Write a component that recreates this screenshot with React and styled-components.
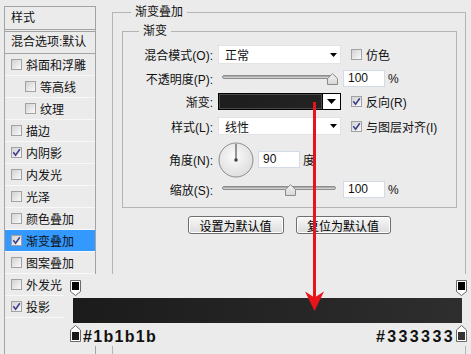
import styled, { createGlobalStyle } from "styled-components";

const GlobalStyle = createGlobalStyle`
  html, body { margin: 0; padding: 0; background: #ebebeb; }
  body {
    font-family: "Liberation Sans", "Noto Sans CJK SC", sans-serif;
    font-size: 12px;
    color: #111;
  }
`;

const Window = styled.div`
  position: relative;
  width: 471px;
  height: 354px;
  overflow: hidden;
  display: flex;
  align-items: flex-start;
  background: #ebebeb;
`;

/* 左侧样式列表 */
const Sidebar = styled.ul`
  list-style: none;
  margin: 6px 0 0 4px;
  padding: 0;
  width: 92px;
  height: 420px;
  box-sizing: border-box;
  border: 1px solid #a3a3a3;
  flex-shrink: 0;
`;

const SideHead = styled.li`
  height: ${(p) => p.$h}px;
  line-height: ${(p) => p.$h}px;
  padding-left: 6px;
  white-space: nowrap;
  border-bottom: ${(p) => (p.$double ? "3px double #a3a3a3" : "1px solid #a3a3a3")};
`;

const SideItem = styled.li`
  display: flex;
  align-items: center;
  gap: 4px;
  height: 21px;
  padding-left: ${(p) => (p.$nested ? 20 : 6)}px;
  border-bottom: 1px solid #f8f8f8;
  background: ${(p) => (p.$active ? "#3399ff" : "transparent")};
  white-space: nowrap;
`;

const Box = styled.span`
  width: 11px;
  height: 11px;
  box-sizing: border-box;
  border: 1px solid #a2a2a2;
  background: linear-gradient(135deg, #d2d2d2, #fafafa);
  display: inline-flex;
  align-items: center;
  justify-content: center;
  flex-shrink: 0;
`;

function Check({ on }) {
  return (
    <Box>
      {on && (
        <svg width="9" height="9" viewBox="0 0 9 9">
          <path d="M1.3 4.3 L3.6 7.2 L7.8 1.2" fill="none" stroke="#3e3e8c" strokeWidth="1.6" />
        </svg>
      )}
    </Box>
  );
}

/* 右侧面板 */
const Main = styled.div`
  margin-left: 16px;
  width: 354px;
  flex-shrink: 0;
`;

const OuterSet = styled.fieldset`
  margin: 5px 0 0;
  padding: 0;
  height: 420px;
  box-sizing: border-box;
  border: 1px solid #b4b4b4;
  min-width: 0;
`;

const Legend = styled.legend`
  margin-left: ${(p) => p.$indent}px;
  padding: 0 4px;
  font-size: 12px;
  line-height: 14px;
`;

const InnerSet = styled.fieldset`
  margin: 5px 8px 0 9px;
  padding: 0 0 9px;
  border: 1px solid #b4b4b4;
  min-width: 0;
`;

const Row = styled.div`
  display: flex;
  align-items: center;
  height: ${(p) => p.$h}px;
  margin-top: ${(p) => p.$top}px;
`;

const Label = styled.label`
  width: 90px;
  padding-right: 5px;
  text-align: right;
  flex-shrink: 0;
  white-space: nowrap;
`;

const Select = styled.div`
  width: 123px;
  height: 100%;
  box-sizing: border-box;
  background: #fff;
  border: 1px solid #e3e3e3;
  display: flex;
  align-items: center;
  justify-content: space-between;
  padding: 0 3px 0 6px;
`;

const Option = styled.span`
  display: flex;
  align-items: center;
  gap: 4px;
  margin-left: 10px;
  white-space: nowrap;
`;

const Slider = styled.div`
  position: relative;
  width: 114px;
  height: 12px;
  margin: 0 5px 0 4px;
  flex-shrink: 0;
`;

const Track = styled.div`
  position: absolute;
  left: 0;
  right: 0;
  top: 2px;
  height: 4px;
  box-sizing: border-box;
  border-radius: 2px;
  border: 1px solid #8d8d8d;
  background: linear-gradient(#999, #e2e2e2);
`;

const Thumb = styled.svg`
  position: absolute;
  top: 0;
  margin-left: -5.5px;
`;

const NumBox = styled.div`
  width: 42px;
  height: 17px;
  box-sizing: border-box;
  margin-left: ${(p) => p.$gap}px;
  border: 1px solid #d3dce6;
  background: #fff;
  padding-left: 4px;
  line-height: 15px;
  flex-shrink: 0;
`;

const Unit = styled.span`
  margin-left: 3px;
`;

const GradPick = styled.div`
  display: flex;
  width: 123px;
  height: 100%;
  box-sizing: border-box;
  border: 1px solid #000;
`;

const GradSwatch = styled.div`
  flex: 1;
  background: linear-gradient(to right, #1d1d1d, #232323);
  box-shadow: inset 0 0 0 1px #4a4a4a;
  border-right: 1px solid #000;
`;

const GradArrow = styled.div`
  width: 17px;
  display: flex;
  align-items: center;
  justify-content: center;
  background: #fff;
`;

const Dial = styled.svg`
  flex-shrink: 0;
`;

const BtnRow = styled.div`
  display: flex;
  justify-content: center;
  gap: 12px;
  margin-top: 8px;
`;

const Button = styled.button`
  width: ${(p) => p.$w}px;
  height: 18px;
  padding: 0;
  border: 1px solid #6f6f6f;
  border-radius: 3px;
  background: linear-gradient(#f8f8f8, #dcdcdc);
  box-shadow: inset 0 0 0 1px #fff;
  font: 12px "Liberation Sans", "Noto Sans CJK SC", sans-serif;
  color: #000;
`;

/* 渐变编辑条（覆盖在面板上） */
const Overlay = styled.div`
  position: absolute;
  left: 64px;
  top: 274px;
  width: 407px;
  height: 72px;
  box-sizing: border-box;
  padding: 6px 4px 0 6px;
  background: #ebebeb;
  display: flex;
  flex-direction: column;
  z-index: 1;
`;

const StopRow = styled.div`
  display: flex;
  justify-content: space-between;
  align-items: flex-start;
  margin-top: ${(p) => p.$top || 0}px;
`;

const Bar = styled.div`
  height: 25px;
  margin: 2px 5px 0 3px;
  background: linear-gradient(to right, #1b1b1b, #2e2e2e);
`;

const Hex = styled.span`
  font: bold 16px "Liberation Sans", "DejaVu Sans", sans-serif;
  line-height: 16px;
  letter-spacing: ${(p) => p.$ls}px;
  margin: 4px ${(p) => p.$mr || 0}px 0 ${(p) => p.$ml || 0}px;
  color: #111;
`;

const Spacer = styled.div`
  flex: 1;
`;

const ArrowLayer = styled.svg`
  position: absolute;
  left: 0;
  top: 0;
  pointer-events: none;
  z-index: 2;
`;

function DownArrow({ w = 7, h = 4 }) {
  return (
    <svg width={w} height={h} viewBox={`0 0 ${w} ${h}`}>
      <path d={`M0 0 H${w} L${w / 2} ${h} Z`} fill="#000" />
    </svg>
  );
}

function SliderCtl({ pct }) {
  return (
    <Slider>
      <Track />
      <Thumb width="11" height="12" viewBox="0 0 11 12" style={{ left: `${pct}%` }}>
        <defs>
          <linearGradient id="thumbFill" x1="0" y1="0" x2="0" y2="1">
            <stop offset="0" stopColor="#f4f4f4" />
            <stop offset="1" stopColor="#d6d6d6" />
          </linearGradient>
        </defs>
        <path d="M5.5 0.7 L10.5 5.5 V11.5 H0.5 V5.5 Z" fill="url(#thumbFill)" stroke="#8a8a8a" />
      </Thumb>
    </Slider>
  );
}

function TopStop({ color }) {
  return (
    <svg width="11" height="16" viewBox="0 0 11 16">
      <path d="M0.5 0.5 H10.5 V11.5 L5.5 15.5 L0.5 11.5 Z" fill="#fff" stroke="#6a6a6a" />
      <rect x="2" y="2" width="7" height="8" fill={color} />
    </svg>
  );
}

function BottomStop({ color }) {
  return (
    <svg width="11" height="17" viewBox="0 0 11 17">
      <path d="M5.5 0.5 L10.5 5 V16.5 H0.5 V5 Z" fill="#fff" stroke="#6a6a6a" />
      <rect x="2" y="7" width="7" height="8" fill={color} />
    </svg>
  );
}

const styles = [
  { name: "斜面和浮雕", on: false },
  { name: "等高线", on: false, nested: true },
  { name: "纹理", on: false, nested: true },
  { name: "描边", on: false },
  { name: "内阴影", on: true },
  { name: "内发光", on: false },
  { name: "光泽", on: false },
  { name: "颜色叠加", on: false },
  { name: "渐变叠加", on: true, active: true },
  { name: "图案叠加", on: false },
  { name: "外发光", on: false },
  { name: "投影", on: true },
];

export default function App() {
  return (
    <>
      <GlobalStyle />
      <Window>
        <Sidebar>
          <SideHead $h={22} $double>样式</SideHead>
          <SideHead $h={21}>混合选项:默认</SideHead>
          {styles.map((s) => (
            <SideItem key={s.name} $nested={s.nested} $active={s.active}>
              <Check on={s.on} />
              {s.name}
            </SideItem>
          ))}
        </Sidebar>

        <Main>
          <OuterSet>
            <Legend $indent={18}>渐变叠加</Legend>
            <InnerSet>
              <Legend $indent={16}>渐变</Legend>

              <Row $h={19} $top={7}>
                <Label>混合模式(O):</Label>
                <Select>
                  正常
                  <DownArrow />
                </Select>
                <Option>
                  <Check on={false} />
                  仿色
                </Option>
              </Row>

              <Row $h={17} $top={6}>
                <Label>不透明度(P):</Label>
                <SliderCtl pct={97} />
                <NumBox $gap={2}>100</NumBox>
                <Unit>%</Unit>
              </Row>

              <Row $h={17} $top={6}>
                <Label>渐变:</Label>
                <GradPick>
                  <GradSwatch />
                  <GradArrow>
                    <DownArrow w={9} h={5} />
                  </GradArrow>
                </GradPick>
                <Option>
                  <Check on />
                  反向(R)
                </Option>
              </Row>

              <Row $h={18} $top={7}>
                <Label>样式(L):</Label>
                <Select>
                  线性
                  <DownArrow />
                </Select>
                <Option>
                  <Check on />
                  与图层对齐(I)
                </Option>
              </Row>

              <Row $h={35} $top={7}>
                <Label>角度(N):</Label>
                <Dial width="36" height="36" viewBox="0 0 36 36">
                  <defs>
                    <radialGradient id="dialFill" cx="0.45" cy="0.4" r="0.6">
                      <stop offset="0" stopColor="#fbfbfb" />
                      <stop offset="1" stopColor="#dedede" />
                    </radialGradient>
                  </defs>
                  <circle cx="18" cy="18" r="17" fill="url(#dialFill)" stroke="#8c8c8c" />
                  <line x1="18" y1="18" x2="18" y2="2" stroke="#555" strokeWidth="1.2" />
                  <circle cx="18" cy="18" r="1.8" fill="#444" />
                </Dial>
                <NumBox $gap={4}>90</NumBox>
                <Unit>度</Unit>
              </Row>

              <Row $h={17} $top={4}>
                <Label>缩放(S):</Label>
                <SliderCtl pct={60} />
                <NumBox $gap={2}>100</NumBox>
                <Unit>%</Unit>
              </Row>
            </InnerSet>

            <BtnRow>
              <Button $w={96}>设置为默认值</Button>
              <Button $w={95}>复位为默认值</Button>
            </BtnRow>
          </OuterSet>
        </Main>

        <Overlay>
          <StopRow>
            <TopStop color="#000" />
            <TopStop color="#000" />
          </StopRow>
          <Bar />
          <StopRow $top={2}>
            <BottomStop color="#1b1b1b" />
            <Hex $ls={1.3} $ml={2}>#1b1b1b</Hex>
            <Spacer />
            <Hex $ls={2.4} $mr={1}>#333333</Hex>
            <BottomStop color="#333" />
          </StopRow>
        </Overlay>

        <ArrowLayer width="471" height="354" viewBox="0 0 471 354">
          <line x1="314.5" y1="102" x2="314.5" y2="300" stroke="#e8141b" strokeWidth="3" />
          <path d="M314.5 311 L305 291.5 L314.5 297.5 L324 291.5 Z" fill="#e8141b" />
        </ArrowLayer>
      </Window>
    </>
  );
}
